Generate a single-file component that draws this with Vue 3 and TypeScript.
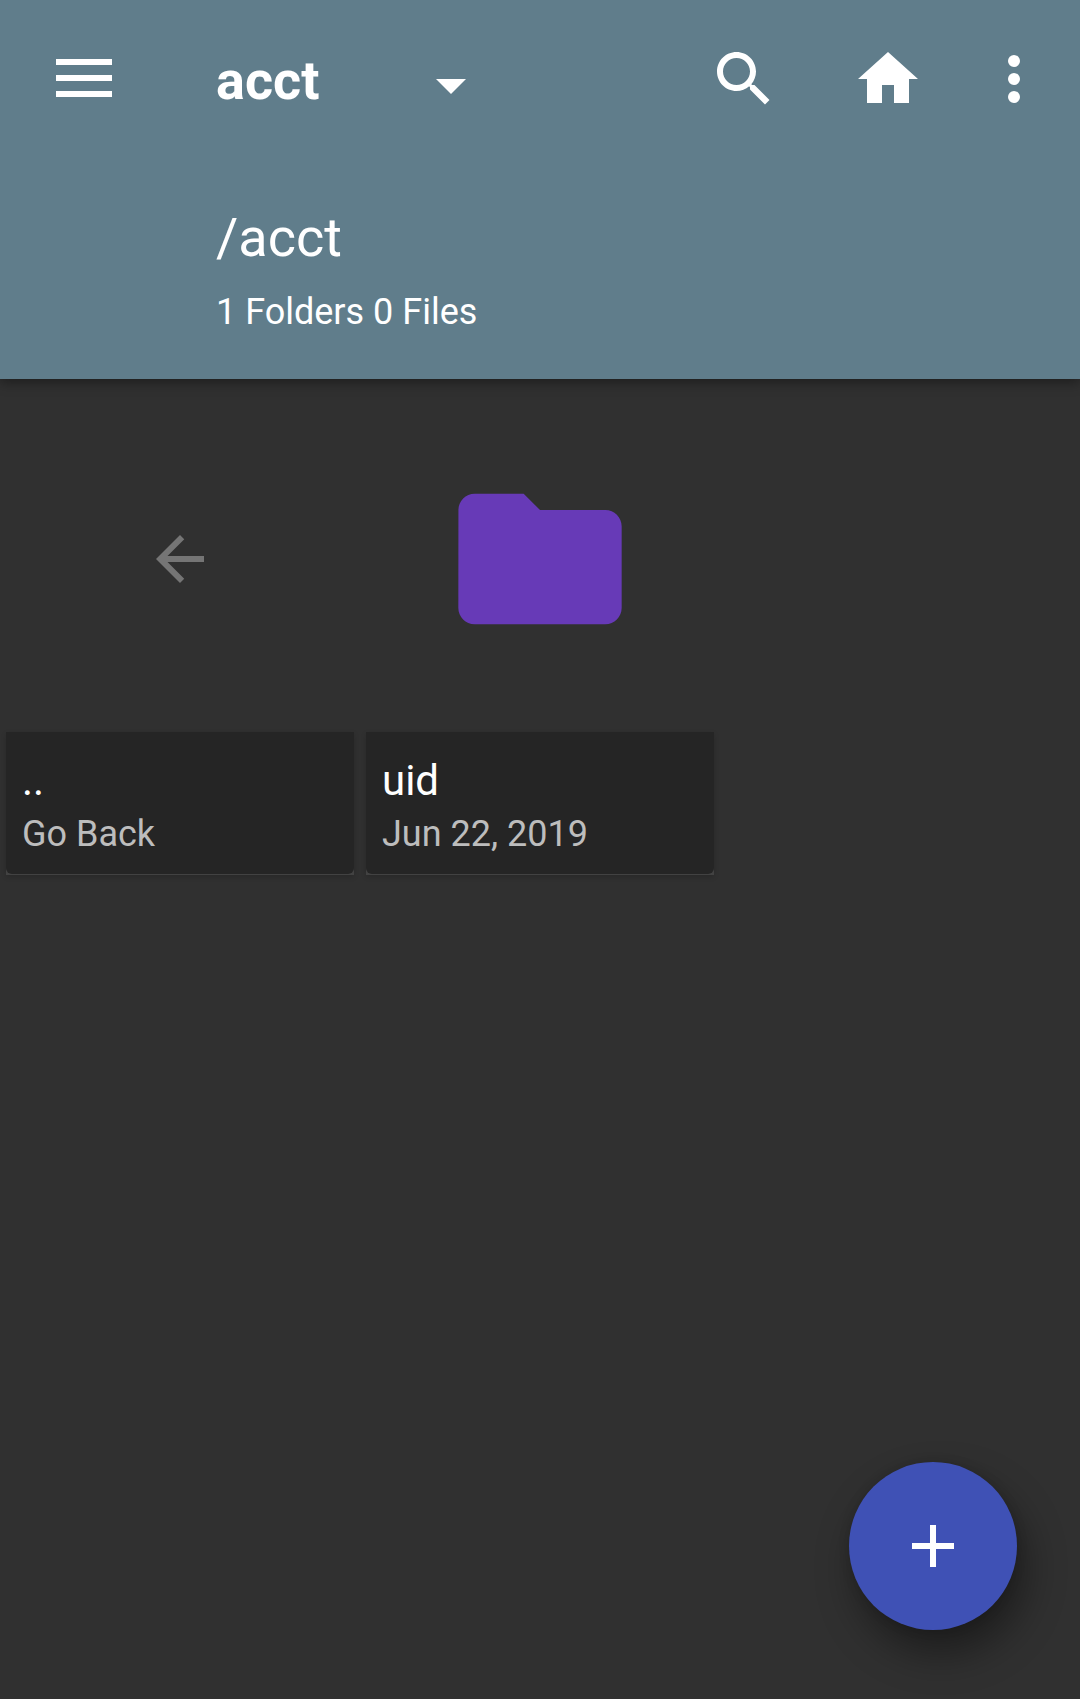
<script setup lang="ts">
interface Entry {
  name: string
  detail: string
  kind: 'back' | 'folder'
}

const title = 'acct'
const path = '/acct'
const summary = '1 Folders 0 Files'

const entries: Entry[] = [
  { name: '..', detail: 'Go Back', kind: 'back' },
  { name: 'uid', detail: 'Jun 22, 2019', kind: 'folder' },
]
</script>

<template>
  <div class="screen">
    <header class="appbar">
      <div class="toolbar">
        <button class="menu" aria-label="Menu">
          <i></i>
          <i></i>
          <i></i>
        </button>
        <h1 class="title">{{ title }}</h1>
        <svg class="icon caret" viewBox="0 0 24 24"><path d="M7 10l5 5 5-5z" /></svg>
        <div class="actions">
          <svg class="icon" viewBox="0 0 24 24">
            <path d="M15.5 14h-.79l-.28-.27C15.41 12.59 16 11.11 16 9.5 16 5.91 13.09 3 9.5 3S3 5.91 3 9.5 5.91 16 9.5 16c1.61 0 3.09-.59 4.23-1.57l.27.28v.79l5 4.99L20.49 19l-4.99-5zm-6 0C7.01 14 5 11.99 5 9.5S7.01 5 9.5 5 14 7.01 14 9.5 11.99 14 9.5 14z" />
          </svg>
          <svg class="icon" viewBox="0 0 24 24">
            <path d="M10 20v-6h4v6h5v-8h3L12 3 2 12h3v8z" />
          </svg>
          <svg class="icon more" viewBox="0 0 24 24">
            <circle cx="12" cy="6" r="2" />
            <circle cx="12" cy="12" r="2" />
            <circle cx="12" cy="18" r="2" />
          </svg>
        </div>
      </div>
      <div class="location">
        <p class="path">{{ path }}</p>
        <p class="summary">{{ summary }}</p>
      </div>
    </header>

    <main class="grid">
      <article v-for="entry in entries" :key="entry.name" class="tile">
        <div class="thumb">
          <svg v-if="entry.kind === 'back'" class="arrow" viewBox="0 0 24 24">
            <path d="M20 11H7.83l5.59-5.59L12 4l-8 8 8 8 1.41-1.41L7.83 13H20v-2z" />
          </svg>
          <svg v-else class="folder" viewBox="0 0 24 24">
            <path d="M10 4H4c-1.1 0-1.99.9-1.99 2L2 18c0 1.1.9 2 2 2h16c1.1 0 2-.9 2-2V8c0-1.1-.9-2-2-2h-8l-2-2z" />
          </svg>
        </div>
        <div class="caption">
          <div class="caption-body">
            <p class="name">{{ entry.name }}</p>
            <p class="detail">{{ entry.detail }}</p>
          </div>
        </div>
      </article>
    </main>

    <button class="fab" aria-label="Add">
      <svg class="icon" viewBox="0 0 24 24"><path d="M19 13h-6v6h-2v-6H5v-2h6V5h2v6h6v2z" /></svg>
    </button>
  </div>
</template>

<style>
body {
  margin: 0;
  background: #303030;
}
</style>

<style scoped>
.screen {
  position: relative;
  width: 1080px;
  height: 1699px;
  overflow: hidden;
  background: #303030;
  color: #fff;
  font-family: Roboto, 'Liberation Sans', sans-serif;
}

p,
h1 {
  margin: 0;
  white-space: nowrap;
}

button {
  border: 0;
  padding: 0;
  color: inherit;
}

.icon {
  display: block;
  flex: none;
  width: 72px;
  height: 72px;
  fill: #fff;
}

.appbar {
  position: relative;
  box-sizing: border-box;
  height: 379px;
  background: #607d8b;
  box-shadow: 0 3px 12px rgba(0, 0, 0, 0.42);
}

.toolbar {
  display: flex;
  align-items: center;
  box-sizing: border-box;
  height: 158px;
  padding: 0 30px 0 56px;
}

.menu {
  display: flex;
  flex-direction: column;
  flex: none;
  gap: 10px;
  width: 56px;
  margin-top: -2px;
  background: none;
}

.menu i {
  height: 6px;
  background: #fff;
}

.title {
  width: 199px;
  margin: 4px 0 0 104px;
  font-size: 54px;
  line-height: 64px;
  font-weight: 700;
}

.caret {
  margin-top: 12px;
}

.actions {
  display: flex;
  margin-left: auto;
}

.actions .icon + .icon {
  margin-left: 72px;
}

.actions .icon.more {
  margin-left: 54px;
}

.location {
  padding: 48px 0 0 216px;
}

.path {
  font-size: 54px;
  line-height: 64px;
}

.summary {
  margin-top: 21px;
  font-size: 36px;
  line-height: 42px;
}

.grid {
  display: grid;
  grid-template-columns: repeat(3, 360px);
}

.tile {
  padding: 6px;
}

.thumb {
  display: flex;
  align-items: center;
  justify-content: center;
  height: 347px;
}

.arrow {
  width: 72px;
  height: 72px;
  fill: #757575;
}

.folder {
  width: 196px;
  height: 196px;
  fill: #673ab7;
}

.caption {
  height: 143px;
  background: #424242;
  box-shadow: 0 2px 5px rgba(0, 0, 0, 0.16);
}

.caption-body {
  box-sizing: border-box;
  height: 142px;
  padding: 24px 16px 0;
  border-radius: 0 0 6px 6px;
  background: #252525;
}

.name {
  font-size: 42px;
  line-height: 50px;
}

.detail {
  margin-top: 7px;
  font-size: 36px;
  line-height: 42px;
  color: #bdbdbd;
}

.fab {
  position: absolute;
  left: 849px;
  top: 1462px;
  display: flex;
  align-items: center;
  justify-content: center;
  width: 168px;
  height: 168px;
  border-radius: 50%;
  background: #3f51b5;
  box-shadow: 8px 22px 40px rgba(0, 0, 0, 0.42), 0 0 12px rgba(0, 0, 0, 0.12);
}
</style>
